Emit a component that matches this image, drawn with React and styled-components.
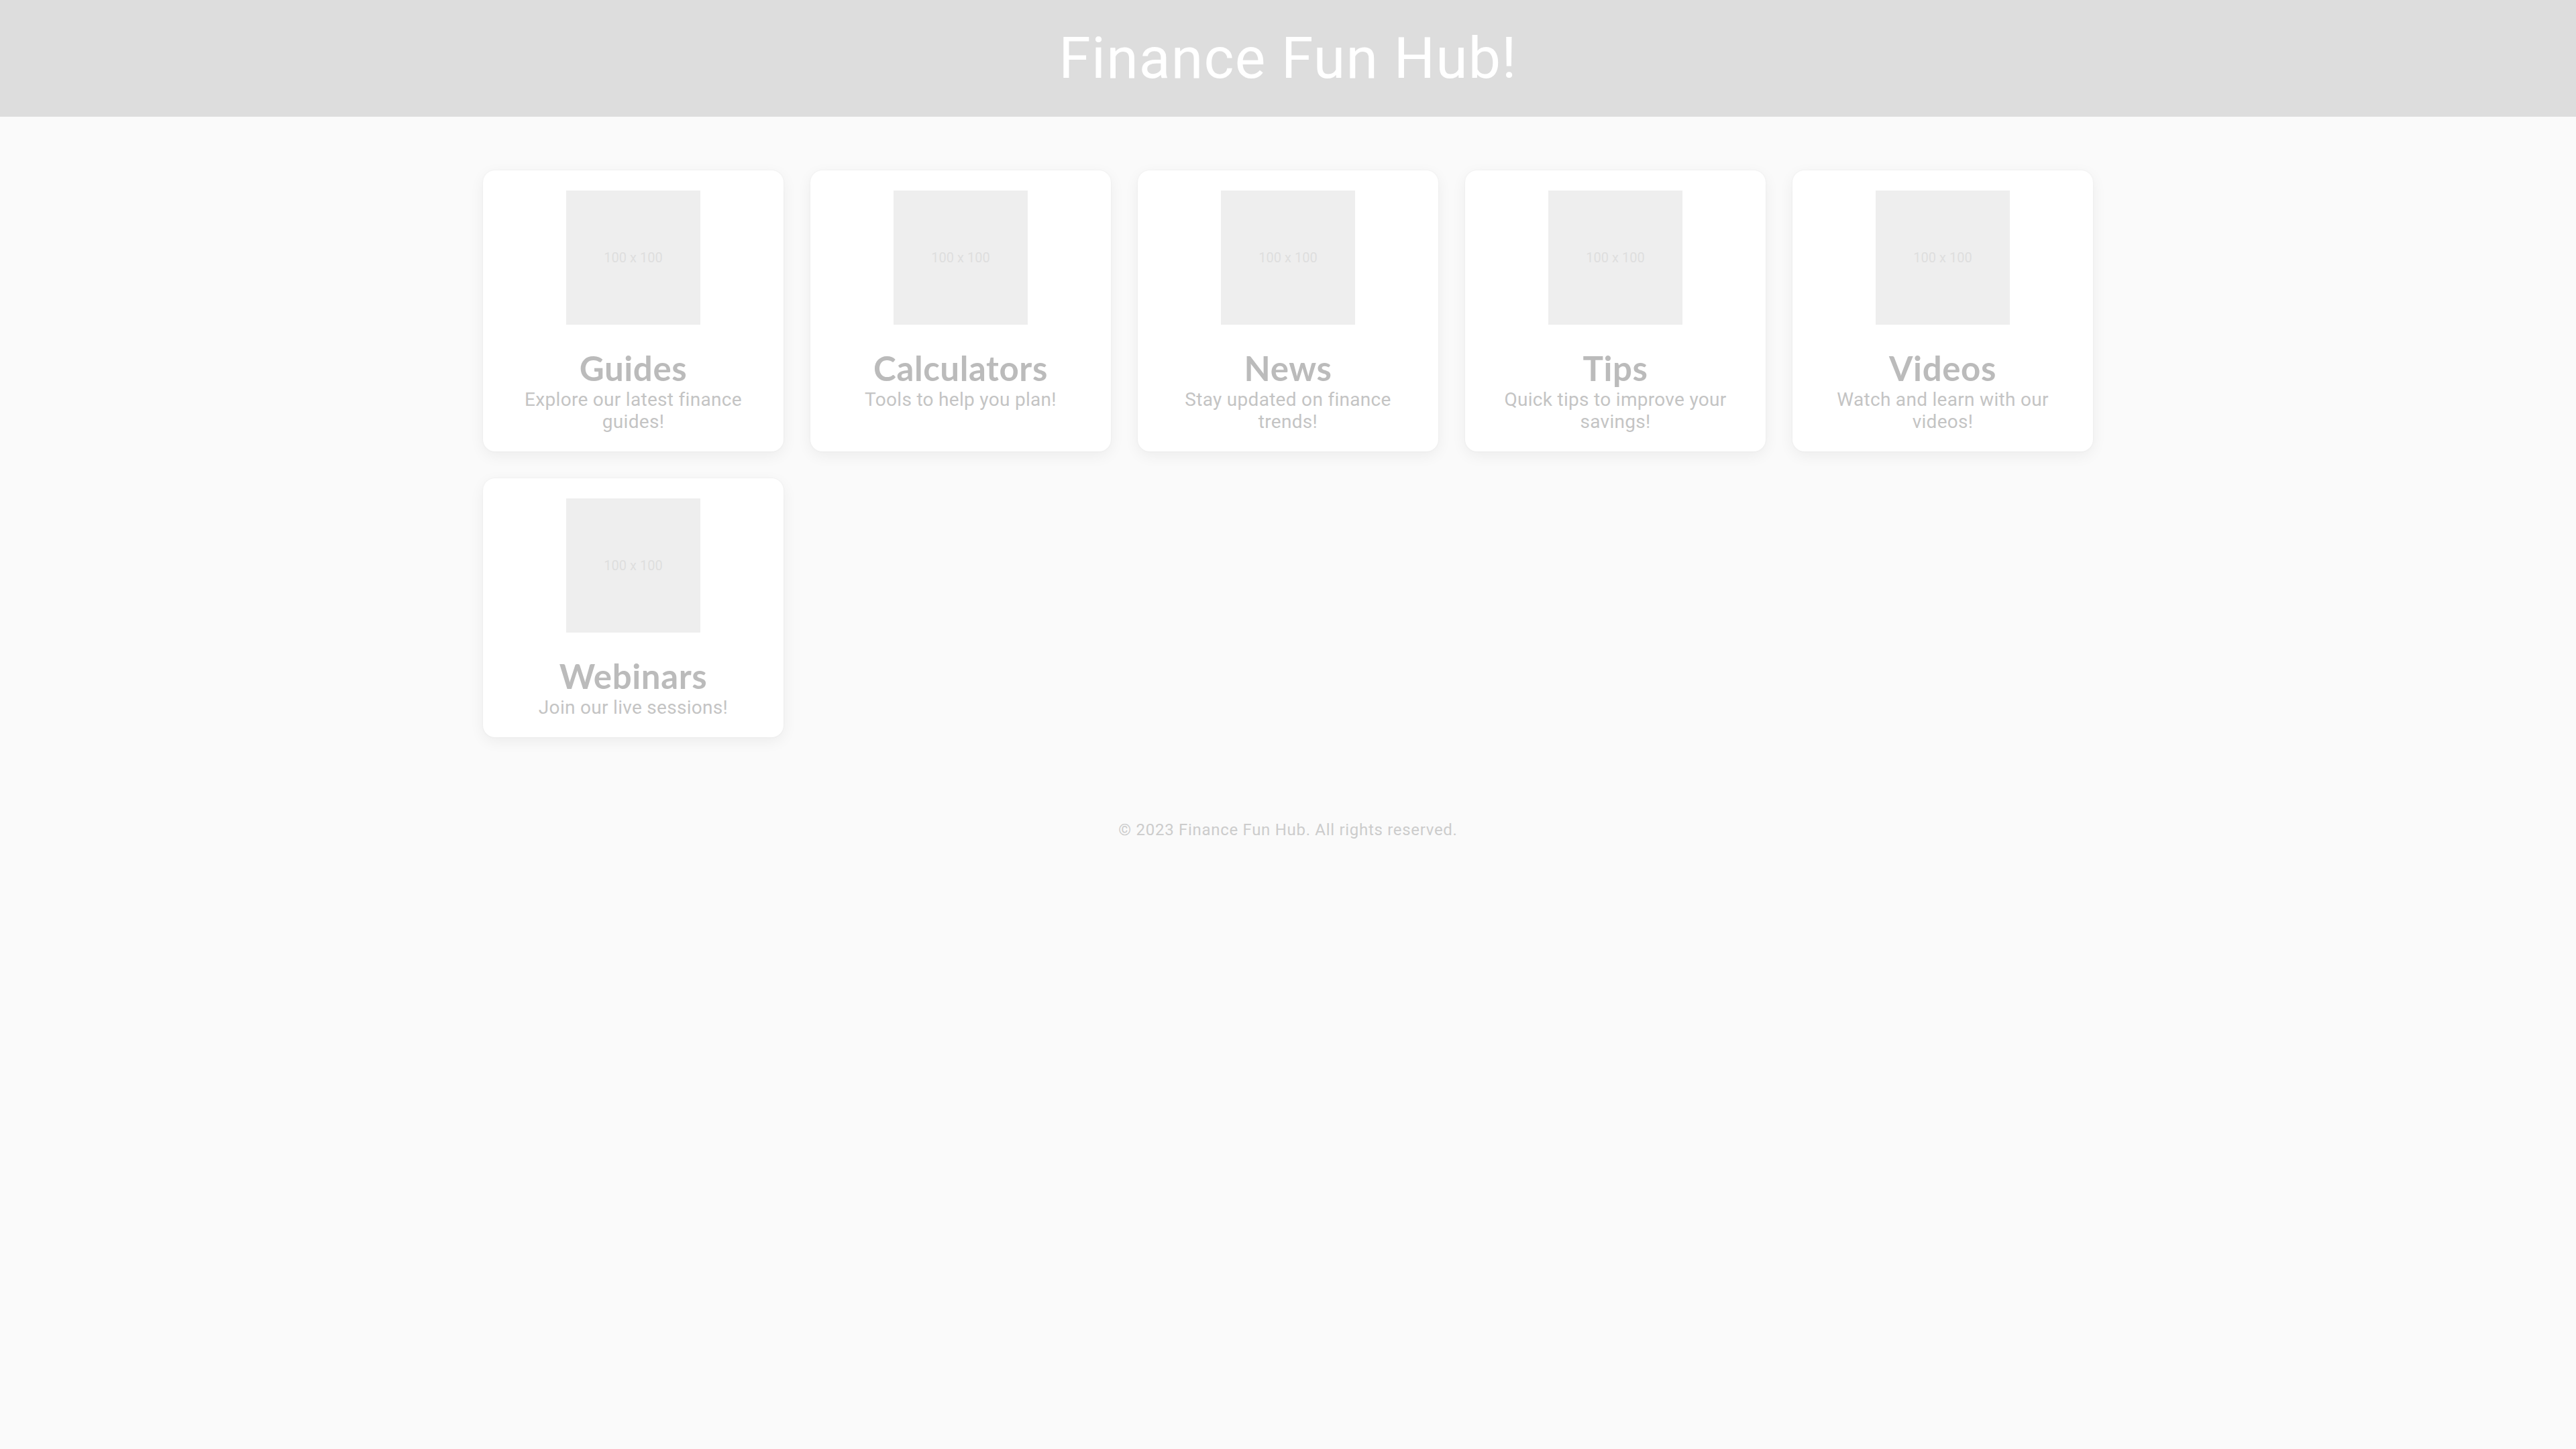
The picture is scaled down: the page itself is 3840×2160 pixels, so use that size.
import React from 'react'
import styled, { createGlobalStyle } from 'styled-components'

const GlobalStyle = createGlobalStyle`
  html, body {
    margin: 0;
    padding: 0;
    background: #fafafa;
    font-family: Roboto, "Liberation Sans", sans-serif;
  }
`

const Header = styled.header`
  height: 174px;
  background: #dddddd;
  display: flex;
  align-items: center;
  justify-content: center;
`

const Title = styled.h1`
  margin: 0 0 2px;
  color: #ffffff;
  font-family: Roboto, "Liberation Sans", sans-serif;
  font-weight: 400;
  font-size: 86px;
  letter-spacing: 1.2px;
`

const Main = styled.main`
  max-width: 2400px;
  margin: 0 auto;
  padding: 80px 0;
`

const Grid = styled.div`
  display: grid;
  grid-template-columns: repeat(5, 1fr);
  gap: 40px;
`

const Card = styled.div`
  background: #ffffff;
  border-radius: 18px;
  box-shadow: 0 6px 22px rgba(0, 0, 0, 0.06), 0 0 3px rgba(0, 0, 0, 0.05);
  padding: 30px 30px 28px;
  display: flex;
  flex-direction: column;
  align-items: center;
  text-align: center;
`

const Placeholder = styled.div`
  width: 200px;
  height: 200px;
  background: #eeeeee;
  color: #dedede;
  font-size: 20px;
  display: flex;
  align-items: center;
  justify-content: center;
`

const CardTitle = styled.h3`
  margin: 35px 0 0;
  font-family: Lato, "Open Sans", sans-serif;
  font-weight: 700;
  font-size: 51px;
  line-height: 60px;
  letter-spacing: 0.6px;
  color: #bbbbbb;
`

const CardText = styled.p`
  margin: 0;
  font-size: 28px;
  line-height: 33px;
  letter-spacing: 0.3px;
  color: #c4c4c4;
`

const Footer = styled.footer`
  text-align: center;
  padding: 44px 0 40px;
  font-size: 24px;
  line-height: 28px;
  letter-spacing: 0.7px;
  color: #cccccc;
`

const items = [
  { title: 'Guides', text: 'Explore our latest finance guides!' },
  { title: 'Calculators', text: 'Tools to help you plan!' },
  { title: 'News', text: 'Stay updated on finance trends!' },
  { title: 'Tips', text: 'Quick tips to improve your savings!' },
  { title: 'Videos', text: 'Watch and learn with our videos!' },
  { title: 'Webinars', text: 'Join our live sessions!' },
]

const App = () => {
  return (
    <>
      <GlobalStyle />
      <Header>
        <Title>Finance Fun Hub!</Title>
      </Header>
      <Main>
        <Grid>
          {items.map((item) => (
            <Card key={item.title}>
              <Placeholder>100 x 100</Placeholder>
              <CardTitle>{item.title}</CardTitle>
              <CardText>{item.text}</CardText>
            </Card>
          ))}
        </Grid>
      </Main>
      <Footer>© 2023 Finance Fun Hub. All rights reserved.</Footer>
    </>
  )
}

export default App
